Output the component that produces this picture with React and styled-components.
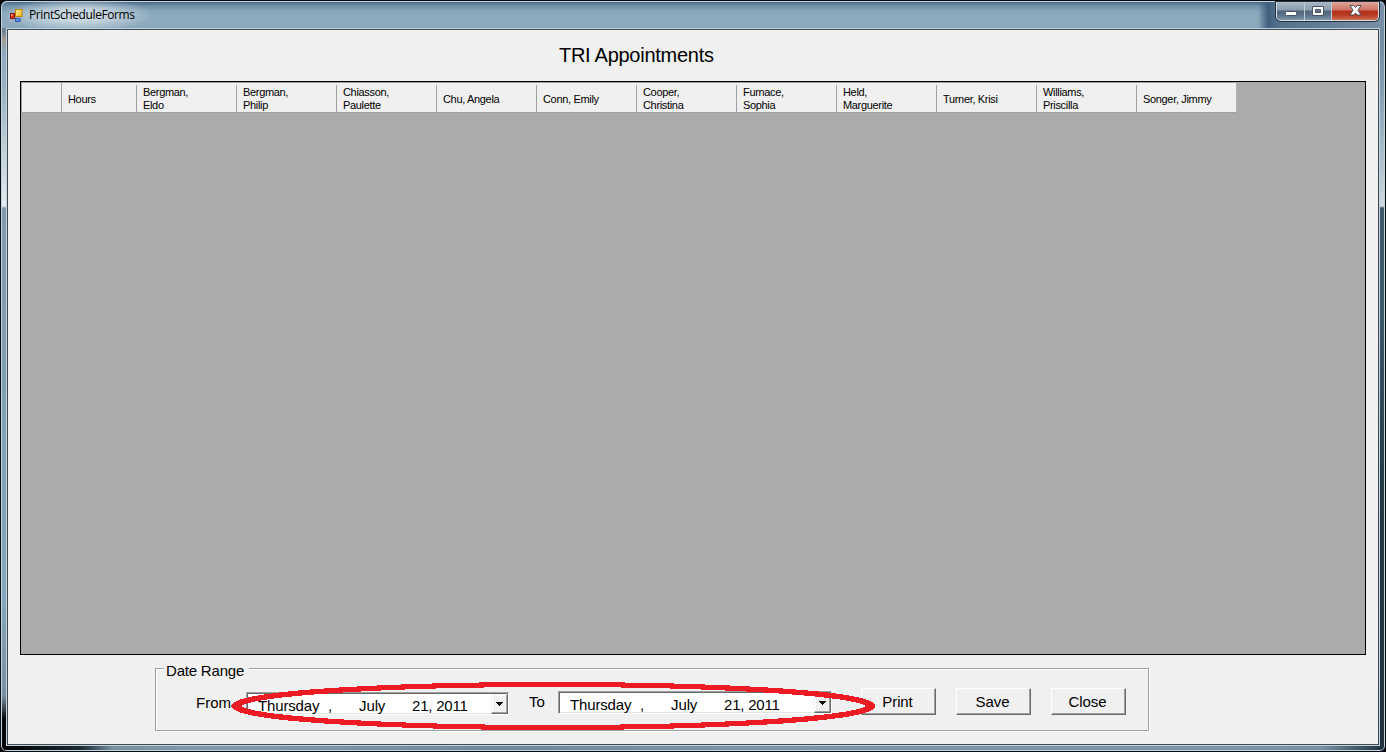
import React from "react";
import styled, { createGlobalStyle, css } from "styled-components";

const Global = createGlobalStyle`
  * { box-sizing: border-box; }
  html, body { margin: 0; background: #05070a; }
  body { overflow: hidden; font-family: "Liberation Sans", Arial, sans-serif; color: #000; }
`;

const Window = styled.div`
  position: relative;
  width: 1386px;
  height: 752px;
  display: flex;
  flex-direction: column;
  border: 1px solid #080d14;
  border-radius: 7px 7px 6px 6px;
  padding: 0 5px 5px 5px;
  box-shadow: inset 0 0 0 1px #c3d5df;
  background:
    linear-gradient(90deg, #000 0, #1b2a33 80px, #78909e 112px, #7f9caf 220px, #6e8999 500px, #7b98aa 800px, #7694a5 1320px, #1c2f3a 1384px) 0 744px / 100% 7px no-repeat,
    linear-gradient(180deg, #7f9db3 0, #6d7f92 30px, #a39d91 38px, #8ea9c4 52px, #9ab2c1 90px, #b3c6d1 130px, #e4ecf0 205px, #7f9bae 207px, #86a5bc 600px, #7891a2 695px, #05080a 718px) 0 0 / 7px 100% no-repeat,
    linear-gradient(180deg, #52718c 0, #718ba0 28px, #7f9aae 80px, #a9bcc9 150px, #d0d9df 205px, #3f5a6b 207px, #3c596a 310px, #263a46 480px, #22333f 750px) 1377px 0 / 8px 100% no-repeat,
    #7f9caf;
`;

const TitleBar = styled.header`
  height: 27px;
  flex: none;
  display: flex;
  align-items: flex-start;
  margin: 0 -4px;
  padding: 0 5px 0 7px;
  border-top: 1px solid #c3d5df;
  border-radius: 6px 6px 0 0;
  background:
    radial-gradient(ellipse 76px 17px at 76px 13px, rgba(215, 226, 233, 0.8) 35%, rgba(205, 220, 229, 0) 100%),
    linear-gradient(90deg, rgba(77, 104, 130, 0) 1256px, #405f7e 1266px, #52718d 1276px, #7890a5 1382px),
    linear-gradient(180deg, #4b6b8c 0, #7191a9 4px, #87a5b9 9px, #8eabbe 17px, #8ba9bc 27px);
`;

const AppIcon = styled.svg`
  width: 14px;
  height: 14px;
  margin-top: 7px;
`;

const Caption = styled.h1`
  margin: 6px 0 0 6px;
  font: 12px/14px "Open Sans", "Noto Sans", sans-serif;
  letter-spacing: -0.4px;
  white-space: nowrap;
`;

const CaptionButtons = styled.div`
  display: flex;
  width: 103px;
  height: 19px;
  margin-left: auto;
  border: 1px solid #d4dee5;
  border-top: 0;
  border-radius: 0 0 5px 5px;
  box-shadow: 0 0 0 1px #26323d;
  overflow: hidden;
`;

const CaptionButton = styled.button`
  flex: 0 0 ${(p) => p.$w}px;
  padding: 0 0 1px;
  border: 0;
  border-right: 1px solid #c3ced8;
  display: flex;
  align-items: center;
  justify-content: center;
  background: linear-gradient(180deg, #aab8c6 0, #8b9cae 8px, #50657b 9px, #60778e 14px, #899fb3 19px);
  &:last-child { border-right: 0; }
  ${(p) =>
    p.$close &&
    css`background: linear-gradient(180deg, #dfa79c 0, #cc7465 8px, #b5301c 9px, #b63a22 13px, #d6795b 19px);`}
`;

const Client = styled.main`
  flex: 1;
  display: flex;
  flex-direction: column;
  margin-right: -1px;
  width: 1374px;
  border: 1px solid #c2d2dc;
  background: #f0f0f0;
`;

const ClientInner = styled.div`
  flex: 1;
  border: 1px solid #3f4b53;
  padding: 0 12px;
`;

const Heading = styled.h2`
  height: 51px;
  margin: 0;
  padding: 13px 0 0 539px;
  font-size: 20px;
  line-height: 24px;
  font-weight: 400;
  letter-spacing: -0.27px;
`;

const Grid = styled.section`
  width: 1346px;
  height: 574px;
  border: 1px solid #000;
  background: #ababab;
`;

const HeaderRow = styled.div`
  display: flex;
  width: 1216px;
  height: 31px;
  border: 1px solid #a0a0a0;
  border-right-color: #b4b4b4;
  background: #f0f0f0;
`;

const Corner = styled.div`
  flex: 0 0 40px;
  border-right: 1px solid #a0a0a0;
`;

const ColumnHeader = styled.div`
  flex: 0 0 ${(p) => p.$w}px;
  height: 27px;
  margin-top: 2px;
  padding: ${(p) => (p.$wrapped ? 1 : 2)}px 0 0 6px;
  border-right: 1px solid #a0a0a0;
  display: flex;
  flex-direction: column;
  justify-content: center;
  font-size: 11px;
  line-height: 13px;
  letter-spacing: -0.33px;
  white-space: nowrap;
  &:last-child { flex-basis: 99px; border-right: 0; }
`;

const GroupBox = styled.div`
  width: 994px;
  height: 63px;
  margin: 13px 0 0 135px;
  border: 1px solid #a0a0a0;
  box-shadow: inset 1px 1px 0 #fff, 1px 1px 0 #fff;
  font-size: 15px;
  line-height: 18px;
`;

const Legend = styled.div`
  width: 85px;
  height: 18px;
  margin: -7px 0 0 8px;
  padding-left: 2px;
  background: #f0f0f0;
  letter-spacing: -0.2px;
  white-space: nowrap;
`;

const Controls = styled.div`
  display: flex;
  align-items: flex-start;
  padding-left: 40px;
  margin-top: 8px;
`;

const Label = styled.label`
  width: ${(p) => p.$w}px;
  margin-top: ${(p) => p.$top}px;
  margin-left: ${(p) => p.$left || 0}px;
  white-space: nowrap;
`;

const Picker = styled.div`
  display: flex;
  width: ${(p) => p.$w}px;
  height: 23px;
  margin-top: ${(p) => p.$top}px;
  border: 1px solid;
  border-color: #a0a0a0 #fff #fff #a0a0a0;
  background: #fff;
  box-shadow: inset 1px 1px 0 #696969, inset -1px -1px 0 #e3e3e3;
`;

const DatePart = styled.span`
  flex: 0 0 ${(p) => p.$w}px;
  padding-top: 4px;
  white-space: pre;
  letter-spacing: ${(p) => p.$ls || 0}px;
`;

const DropButton = styled.button`
  width: 17px;
  height: 20px;
  margin: 1px 0 0 auto;
  padding: 0;
  border: 1px solid;
  border-color: #f0f0f0 #696969 #696969 #f0f0f0;
  box-shadow: inset -1px -1px 0 #a0a0a0, inset 1px 1px 0 #fff;
  background: #f0f0f0;
  display: flex;
  align-items: center;
  justify-content: center;
`;

const PushButton = styled.button`
  width: 75px;
  height: 27px;
  margin: 0 0 0 ${(p) => p.$left}px;
  padding: 1px 2px 0 0;
  border: 1px solid;
  border-color: #fff #696969 #696969 #fff;
  box-shadow: inset -1px -1px 0 #a0a0a0;
  background: #f0f0f0;
  font: 15px/18px "Liberation Sans", Arial, sans-serif;
  letter-spacing: -0.1px;
`;

const Highlight = styled.svg`
  position: absolute;
  left: 229px;
  top: 680px;
  width: 648px;
  height: 50px;
  pointer-events: none;
`;

const columns = [
  ["Hours"],
  ["Bergman,", "Eldo"],
  ["Bergman,", "Philip"],
  ["Chiasson,", "Paulette"],
  ["Chu, Angela"],
  ["Conn, Emily"],
  ["Cooper,", "Christina"],
  ["Furnace,", "Sophia"],
  ["Held,", "Marguerite"],
  ["Turner, Krisi"],
  ["Williams,", "Priscilla"],
  ["Songer, Jimmy"],
];

function DatePicker({ width, top }) {
  return (
    <Picker $w={width} $top={top}>
      <DatePart $w={11} />
      <DatePart $w={70} $ls={-0.15}>Thursday</DatePart>
      <DatePart $w={31}>,</DatePart>
      <DatePart $w={53} $ls={-0.1}>July</DatePart>
      <DatePart $w={60} $ls={-0.2}>21, 2011</DatePart>
      <DropButton aria-label="Open calendar">
        <svg width="7" height="4" shapeRendering="crispEdges">
          <path d="M0 0h7v1h-1v1h-1v1h-1v1h-1v-1h-1v-1h-1v-1h-1z" />
        </svg>
      </DropButton>
    </Picker>
  );
}

export default function App() {
  return (
    <>
      <Global />
      <Window>
        <TitleBar>
          <AppIcon viewBox="0 0 14 14">
            <defs>
              <linearGradient id="gold" x2="1" y2="1">
                <stop stopColor="#fff0a0" />
                <stop offset="1" stopColor="#efb008" />
              </linearGradient>
            </defs>
            <rect x="1.5" y="4.5" width="4" height="5" fill="#d8321d" stroke="#8f1a12" />
            <rect x="2" y="5" width="1.5" height="2" fill="#f5a090" />
            <rect x="6.5" y="0.5" width="6.5" height="7" fill="url(#gold)" stroke="#b78408" />
            <rect x="6.5" y="9.5" width="4.5" height="3" fill="#5a91ea" stroke="#315cb0" />
            <path d="M1 11h2v2H1zM4 11h2v2H4zM12 10h1v2h-1z" fill="#a8b3bb" />
          </AppIcon>
          <Caption>PrintScheduleForms</Caption>
          <CaptionButtons>
            <CaptionButton $w={28} aria-label="Minimize">
              <svg width="12" height="5" style={{ marginTop: 5 }}>
                <rect x=".5" y=".5" width="11" height="4" rx="1" fill="#fff" stroke="#485363" />
              </svg>
            </CaptionButton>
            <CaptionButton $w={27} aria-label="Maximize">
              <svg width="12" height="10">
                <path fillRule="evenodd" d="M.5.5h11v9H.5zM3.5 3.5v3h5v-3z" fill="#fff" stroke="#485363" />
              </svg>
            </CaptionButton>
            <CaptionButton $w={46} $close aria-label="Close window">
              <svg width="13" height="11">
                <path
                  d="M1 .5h3.7L6.5 2.5 8.3 .5H12L9 5.2 12 10H8.3L6.5 8 4.7 10H1L4 5.2z"
                  fill="#fff"
                  stroke="#4e4a58"
                />
              </svg>
            </CaptionButton>
          </CaptionButtons>
        </TitleBar>
        <Client>
          <ClientInner>
            <Heading>TRI Appointments</Heading>
            <Grid>
              <HeaderRow>
                <Corner />
                {columns.map((lines, i) => (
                  <ColumnHeader key={i} $w={i === 0 ? 75 : 100} $wrapped={lines.length > 1}>
                    {lines.map((line) => (
                      <span key={line}>{line}</span>
                    ))}
                  </ColumnHeader>
                ))}
              </HeaderRow>
            </Grid>
            <GroupBox>
              <Legend>Date Range</Legend>
              <Controls>
                <Label $w={50} $top={6}>From</Label>
                <DatePicker width={263} top={4} />
                <Label $w={29} $left={20} $top={5}>To</Label>
                <DatePicker width={274} top={3} />
                <PushButton $left={29}>Print</PushButton>
                <PushButton $left={20}>Save</PushButton>
                <PushButton $left={20}>Close</PushButton>
              </Controls>
            </GroupBox>
          </ClientInner>
        </Client>
        <Highlight viewBox="230 681 648 50" shapeRendering="crispEdges" fill="none" stroke="#ed1c24" strokeWidth="5">
          {[-2, 0, 2].map((dx) => (
            <ellipse key={dx} cx={553.3 + dx} cy="706" rx="317.5" ry="21.5" />
          ))}
        </Highlight>
      </Window>
    </>
  );
}
